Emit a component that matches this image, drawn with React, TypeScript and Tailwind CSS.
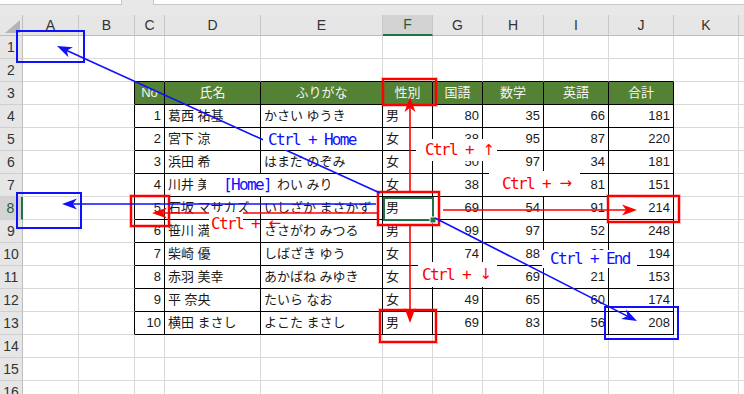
import React from "react";

const WCLS = [
  "w-[56px]",
  "w-[56px]",
  "w-[30px]",
  "w-[96px]",
  "w-[122px]",
  "w-[50px]",
  "w-[50px]",
  "w-[61px]",
  "w-[65px]",
  "w-[65px]",
  "w-[65px]",
  "w-[60px]",
];
const LETTERS = ["A", "B", "C", "D", "E", "F", "G", "H", "I", "J", "K", ""];

const HEAD = ["No", "氏名", "ふりがな", "性別", "国語", "数学", "英語", "合計"];
const DATA: (string | number)[][] = [
  [1, "葛西 祐基", "かさい ゆうき", "男", 80, 35, 66, 181],
  [2, "宮下 涼", "みやした りょう", "女", 38, 95, 87, 220],
  [3, "浜田 希", "はまだ のぞみ", "女", 50, 97, 34, 181],
  [4, "川井 美里", "かわい みり", "女", 38, 32, 81, 151],
  [5, "石坂 マサカズ", "いしざか まさかず", "男", 69, 54, 91, 214],
  [6, "笹川 満", "ささがわ みつる", "男", 99, 97, 52, 248],
  [7, "柴崎 優", "しばざき ゆう", "女", 74, 88, 32, 194],
  [8, "赤羽 美幸", "あかばね みゆき", "女", 63, 69, 21, 153],
  [9, "平 奈央", "たいら なお", "女", 49, 65, 60, 174],
  [10, "横田 まさし", "よこた まさし", "男", 69, 83, 56, 208],
];

function Cell({ r, c }: { r: number; c: number }) {
  const rightBlack = r >= 3 && r <= 13 && c >= 1 && c <= 9;
  const bottomBlack = r >= 2 && r <= 13 && c >= 2 && c <= 9;
  const isHead = r === 3 && c >= 2 && c <= 9;
  let content: React.ReactNode = null;
  let align = "justify-start pl-[3px]";
  if (isHead) {
    content = HEAD[c - 2];
    align = "justify-center";
  } else if (r >= 4 && r <= 13 && c >= 2 && c <= 9) {
    content = DATA[r - 4][c - 2];
    if (c === 2 || c >= 6) align = "justify-end pr-[3px]";
  }
  return (
    <div
      className={[
        "shrink-0 h-full flex items-center overflow-hidden whitespace-pre border-r border-b",
        WCLS[c],
        rightBlack ? "border-r-black" : "border-r-[#d9d9d9]",
        bottomBlack ? "border-b-black" : "border-b-[#d9d9d9]",
        isHead ? "bg-[#548235] text-[#f4f4f4]" : "bg-white text-[#1a1a1a]",
        align,
      ].join(" ")}
    >
      {content}
    </div>
  );
}

function arrow(x1: number, y1: number, x2: number, y2: number, len = 15, hw = 5.5) {
  const dx = x2 - x1;
  const dy = y2 - y1;
  const L = Math.hypot(dx, dy);
  const ux = dx / L;
  const uy = dy / L;
  const px = -uy;
  const py = ux;
  const bx = x2 - ux * len;
  const by = y2 - uy * len;
  const nx = x2 - ux * len * 0.72;
  const ny = y2 - uy * len * 0.72;
  return {
    line: [x1, y1, nx, ny],
    poly: `${x2},${y2} ${bx + px * hw},${by + py * hw} ${nx},${ny} ${bx - px * hw},${by - py * hw}`,
  };
}

function Arrow({ x1, y1, x2, y2, color }: { x1: number; y1: number; x2: number; y2: number; color: string }) {
  const a = arrow(x1, y1, x2, y2);
  return (
    <g>
      <line x1={a.line[0]} y1={a.line[1]} x2={a.line[2]} y2={a.line[3]} stroke={color} strokeWidth={1.6} />
      <polygon points={a.poly} fill={color} />
    </g>
  );
}

const lbl = "absolute flex items-center whitespace-pre font-['DejaVu_Sans_Mono',monospace] text-[16px] tracking-[-1.65px]";
const arr = "inline-block w-[16px] text-center tracking-normal font-['DejaVu_Sans',sans-serif] text-[15px]";

export default function App() {
  const rows = Array.from({ length: 16 }, (_, i) => i + 1);
  return (
    <div className="relative w-[744px] h-[394px] overflow-hidden bg-white font-['Liberation_Sans','Noto_Sans_CJK_JP',sans-serif] text-[13px]">
      {/* top strip */}
      <div className="h-[15px] bg-[#e8e8e8] flex items-start">
        <div className="w-[122px] h-[5px] bg-white border-b border-r border-[#c8c8c8]" />
        <div className="w-[31px]" />
        <div className="flex-1 h-[5px] bg-white border-b border-l border-[#c8c8c8]" />
      </div>
      {/* column header */}
      <div className="flex h-[21px] bg-[#e6e6e6] text-[#333] text-[14px]">
        <div className="shrink-0 w-[23px] h-full border-r border-b border-[#bdbdbd] relative">
          <svg className="absolute right-[2px] bottom-[2px]" width="15" height="13" viewBox="0 0 15 13">
            <polygon points="15,0 15,13 0,13" fill="#b4b4b4" />
          </svg>
        </div>
        {LETTERS.map((l, c) => (
          <div
            key={c}
            className={[
              "shrink-0 h-full flex items-center justify-center border-r border-r-[#c8c8c8]",
              WCLS[c],
              c === 5 ? "bg-[#d3d3d3] border-b-2 border-b-[#217346] text-[#1e5c38]" : "border-b border-b-[#bdbdbd]",
            ].join(" ")}
          >
            {l}
          </div>
        ))}
      </div>
      {/* rows */}
      {rows.map((r) => (
        <div key={r} className="flex h-[23px]">
          <div
            className={[
              "shrink-0 w-[23px] h-full flex items-center justify-center border-b border-b-[#cfcfcf] text-[14px]",
              r === 8
                ? "bg-[#d3d3d3] border-r-2 border-r-[#217346] text-[#1e5c38]"
                : "bg-[#e6e6e6] border-r border-r-[#bdbdbd] text-[#333]",
            ].join(" ")}
          >
            {r}
          </div>
          {LETTERS.map((_, c) => (
            <Cell key={c} r={r} c={c} />
          ))}
        </div>
      ))}

      {/* overlay drawing */}
      <svg className="absolute left-0 top-0 pointer-events-none" width="744" height="394" viewBox="0 0 744 394">
        {/* active cell */}
        <rect x={384} y={198} width={49} height={22} fill="none" stroke="#217346" strokeWidth={2} />
        <rect x={430} y={217} width={6} height={6} fill="#217346" stroke="#fff" strokeWidth={1} />

        {/* blue boxes */}
        <rect x={17} y={31} width={67} height={31} fill="none" stroke="#1010ff" strokeWidth={2} />
        <rect x={17} y={193} width={64} height={35} fill="none" stroke="#1010ff" strokeWidth={2} />
        <rect x={605} y={307} width={73} height={32} fill="none" stroke="#1010ff" strokeWidth={2} />

        {/* red boxes */}
        {[
          [383, 79, 53, 26],
          [131, 196, 38, 30],
          [378, 192, 61, 33],
          [608, 196, 71, 26],
          [380, 310, 56, 32],
        ].map(([x, y, w, h], i) => (
          <g key={i}>
            <rect x={x} y={y} width={w} height={h} fill="none" stroke="rgba(255,0,0,0.25)" strokeWidth={4} />
            <rect x={x} y={y} width={w} height={h} fill="none" stroke="#ff0000" strokeWidth={2} />
          </g>
        ))}

        {/* blue arrows */}
        <Arrow x1={380} y1={193} x2={57} y2={46} color="#1010ff" />
        <Arrow x1={376} y1={204} x2={62} y2={204} color="#1010ff" />
        <Arrow x1={435} y1={218} x2={637} y2={321} color="#1010ff" />

        {/* red arrows */}
        <Arrow x1={410} y1={191} x2={410} y2={97} color="#ff0000" />
        <Arrow x1={410} y1={226} x2={410} y2={323} color="#ff0000" />
        <Arrow x1={443} y1={210} x2={637} y2={210} color="#ff0000" />
        <Arrow x1={378} y1={213} x2={152} y2={213} color="#ff0000" />
      </svg>

      {/* labels */}
      <div className={lbl + " left-[263px] top-[129px] w-[119px] h-[21px] bg-white pl-[5px] text-[#1010ff]"}>Ctrl + Home</div>
      <div className={lbl + " left-[206px] top-[174px] w-[71px] h-[22px] bg-white pl-[17px] text-[#1010ff]"}>[Home]</div>
      <div className={lbl + " left-[416px] top-[139px] w-[81px] h-[22px] bg-white pl-[9px] text-[#ff0000]"}>
        Ctrl + <span className={arr}>↑</span>
      </div>
      <div className={lbl + " left-[489px] top-[171px] w-[91px] h-[25px] bg-white pl-[13px] text-[#ff0000]"}>
        Ctrl + <span className={arr}>→</span>
      </div>
      <div className={lbl + " left-[418px] top-[262px] w-[79px] h-[25px] bg-white pl-[4px] text-[#ff0000]"}>
        Ctrl + <span className={arr}>↓</span>
      </div>
      <div className={lbl + " left-[542px] top-[250px] w-[95px] h-[18px] bg-white pl-[8px] text-[#1010ff]"}>Ctrl + End</div>
      <div className={lbl + " left-[209px] top-[216px] h-[15px] text-[#ff0000]"}>
        <span className="bg-white pl-[2px]">Ctrl</span> + <span className={arr}>←</span>
      </div>
    </div>
  );
}
